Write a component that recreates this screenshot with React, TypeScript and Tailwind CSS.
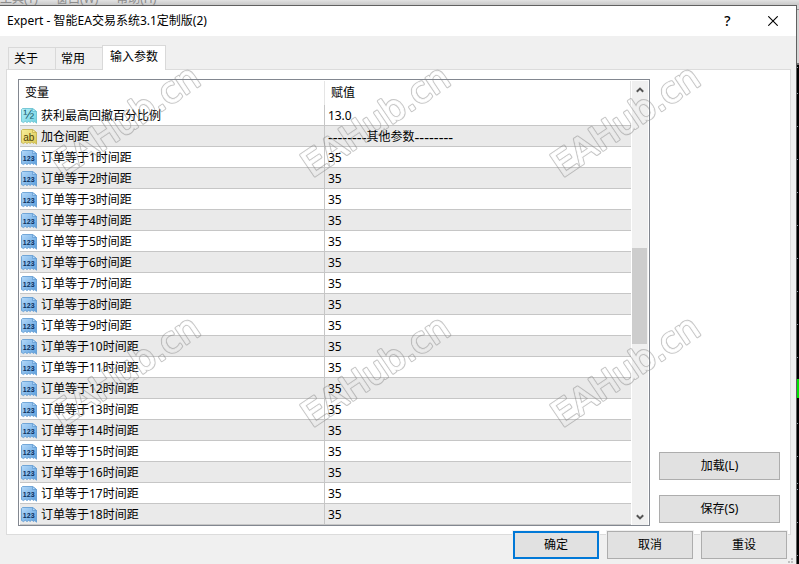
import React, { useState } from 'react';

type ParamKind = 'double' | 'string' | 'int';

interface Param {
  kind: ParamKind;
  name: string;
  value: string;
}

const params: Param[] = [
  { kind: 'double', name: '获利最高回撤百分比例', value: '13.0' },
  { kind: 'string', name: '加仓间距', value: '--------其他参数--------' },
  ...Array.from({ length: 18 }, (_, i): Param => ({
    kind: 'int',
    name: `订单等于${i + 1}时间距`,
    value: '35',
  })),
];

const tabs = ['关于', '常用', '输入参数'];

const iconStyles = {
  double: { from: '#b5f0f8', to: '#6fd0e0', edge: '#5fbccd', ink: '#17596a', text: '½', size: 13 },
  string: { from: '#f8ee9a', to: '#dcc955', edge: '#c2ae45', ink: '#4d4208', text: 'ab', size: 10 },
  int: { from: '#b4d9fa', to: '#5d9fdc', edge: '#5b97cf', ink: '#0b2f5c', text: '123', size: 7 },
};

const ParamIcon: React.FC<{ kind: ParamKind }> = ({ kind }) => {
  const s = iconStyles[kind];
  return (
    <svg viewBox="0 0 16 16" className="w-4 h-4 shrink-0" aria-hidden="true">
      <defs>
        <linearGradient id={`icon-${kind}`} x1="0" y1="0" x2="1" y2="1">
          <stop offset="0" stopColor={s.from} />
          <stop offset="1" stopColor={s.to} />
        </linearGradient>
      </defs>
      <path
        d="M1.5 .5H11.5L15.5 3.5V15.2L13.8 13.6L12.2 14.4L10.8 13L9.2 14.4L7.6 13.4L6 14.6L4.2 13.2L2.6 14.6L.5 13.6V1.5Z"
        fill={`url(#icon-${kind})`}
        stroke={s.edge}
        strokeWidth=".8"
      />
      <path d="M11.5 .5V3.5H15.5Z" fill={s.from} stroke={s.edge} strokeWidth=".7" />
      <text
        x="7.7"
        y={kind === 'string' ? 11.5 : 11}
        fontSize={s.size}
        fontWeight={kind === 'int' ? 700 : 400}
        textAnchor="middle"
        fill={s.ink}
        fontFamily="'Liberation Sans', sans-serif"
      >
        {s.text}
      </text>
    </svg>
  );
};

interface DialogButtonProps {
  children: React.ReactNode;
  className?: string;
  primary?: boolean;
}

const DialogButton: React.FC<DialogButtonProps> = ({ children, className = '', primary }) => (
  <button
    type="button"
    className={`h-7 bg-[#e1e1e1] text-center ${primary ? 'border-2 border-[#0078d7]' : 'border border-[#adadad]'} ${className}`}
  >
    {children}
  </button>
);

const ScrollBar: React.FC = () => (
  <div className="w-4 mr-px shrink-0 bg-[#f0f0f0] flex flex-col">
    <button type="button" aria-label="向上滚动" className="h-[17px] flex items-center justify-center">
      <svg viewBox="0 0 8 6" className="w-2 h-1.5">
        <path d="M.8 4.8L4 1.6L7.2 4.8" fill="none" stroke="#555" strokeWidth="2" />
      </svg>
    </button>
    <div className="flex-1 flex flex-col">
      <div className="grow-[150]" />
      <div className="grow-[95] w-[15px] bg-[#cdcdcd]" />
      <div className="grow-[164]" />
    </div>
    <button type="button" aria-label="向下滚动" className="h-[17px] flex items-center justify-center">
      <svg viewBox="0 0 8 6" className="w-2 h-1.5">
        <path d="M.8 1.2L4 4.4L7.2 1.2" fill="none" stroke="#555" strokeWidth="2" />
      </svg>
    </button>
  </div>
);

// runs of dashes mark a group heading, they are set larger than the text
const ParamValue: React.FC<{ value: string }> = ({ value }) => (
  <div className="flex items-center h-5 pt-px">
    {value.split(/(-+)/).filter(Boolean).map((part, i) => (
      <span key={i} className={part.startsWith('-') ? 'text-[15px] leading-3' : ''}>{part}</span>
    ))}
  </div>
);

const ParamTable: React.FC = () => (
  <div className="flex-1 min-w-0 flex gap-px bg-white border border-[#828790] pt-px pl-px">
    <table className="flex-1 table-fixed border-separate border-spacing-0 text-left">
      <thead>
        <tr className="h-6">
          <th className="w-[49.9%] p-0 pl-[5px] font-normal border-r border-[#e5e5e5]">变量</th>
          <th className="p-0 pl-1.5 font-normal border-r border-[#e5e5e5]">赋值</th>
        </tr>
      </thead>
      <tbody>
        {params.map((p) => (
          <tr key={p.name} className="h-[21px] even:bg-[#eaeaea]">
            <td className="p-0 pl-px border-r border-b border-[#c6c6c6]">
              <div className="flex items-center gap-1 h-5 pt-px">
                <ParamIcon kind={p.kind} />
                <span className="whitespace-nowrap">{p.name}</span>
              </div>
            </td>
            <td className="p-0 pl-[3px] border-b border-[#c6c6c6] whitespace-nowrap">
              <ParamValue value={p.value} />
            </td>
          </tr>
        ))}
      </tbody>
    </table>
    <ScrollBar />
  </div>
);

// chart window that shows past the right edge of the dialog
const ChartEdge: React.FC = () => (
  <svg className="w-0.5 h-full shrink-0 bg-black" aria-hidden="true">
    <rect width="2" height="59" fill="#d4d4d4" />
    <rect y="4" width="2" height="1" fill="#909090" />
    <rect y="58" width="2" height="2" fill="#707070" />
    {[62, 88, 121, 154, 187, 220, 253, 286, 319, 352, 385, 418, 451, 478, 484, 517, 550].map((y) => (
      <rect key={y} y={y} width="1" height="1" fill="#8a94a0" />
    ))}
    <rect y="374" width="2" height="19" fill="#00e000" />
  </svg>
);

const marks = [178, 428].flatMap((y) => [62, 312, 562].map((x) => ({ x, y })));

// the mask keeps only a thin rounded contour around the letters
const Watermark: React.FC = () => (
  <svg className="absolute inset-0 w-full h-full pointer-events-none" aria-hidden="true">
    <mask id="contour" maskUnits="userSpaceOnUse" x="0" y="0" width="100%" height="100%">
      {marks.map(({ x, y }) => (
        <g
          key={`${x}-${y}`}
          transform={`translate(${x} ${y}) rotate(-34)`}
          fontSize="35"
          fontFamily="'DejaVu Sans', sans-serif"
          strokeLinejoin="round"
        >
          <text fill="#fff" stroke="#fff" strokeWidth="2.8">EAHub.cn</text>
          <text fill="#000" stroke="#000" strokeWidth=".8">EAHub.cn</text>
        </g>
      ))}
    </mask>
    <rect width="100%" height="100%" fill="#808080" fillOpacity=".45" mask="url(#contour)" />
  </svg>
);

const App: React.FC = () => {
  const [activeTab, setActiveTab] = useState(2);

  return (
    <div className="relative h-screen overflow-hidden flex flex-col bg-[#dedede] text-black text-[12px] leading-4 font-['Noto_Sans','Noto_Sans_CJK_SC',sans-serif]">
      <div className="h-[5px] shrink-0 overflow-hidden flex items-end gap-[18px] leading-3 text-[#8c8c8c] bg-linear-to-b from-[#e2e2e2] to-[#c8c8c8]">
        <span>工具(T)</span>
        <span>窗口(W)</span>
        <span>帮助(H)</span>
      </div>

      <div className="flex-1 min-h-0 flex">
        <main className="flex-1 min-w-0 flex flex-col bg-[#f0f0f0] border-t border-r border-[#606060]">
          <header className="h-[30px] shrink-0 bg-white flex items-center pl-[7px]">
            <h1 className="flex-1">Expert - 智能EA交易系统3.1定制版(2)</h1>
            <button type="button" aria-label="帮助" className="w-[45px] h-full text-[14px] font-medium">?</button>
            <button type="button" aria-label="关闭" className="w-[46px] h-full flex items-center justify-center">
              <svg viewBox="0 0 10 10" className="w-2.5 h-2.5">
                <path d="M.3 .3L9.7 9.7M9.7 .3L.3 9.7" stroke="#000" strokeWidth="1.1" />
              </svg>
            </button>
          </header>

          <div role="tablist" className="relative flex items-end pt-[9px] pl-2 -mb-px">
            {tabs.map((tab, i) => (
              <button
                key={tab}
                type="button"
                role="tab"
                aria-selected={i === activeTab}
                onClick={() => setActiveTab(i)}
                className={
                  i === activeTab
                    ? 'h-[25px] px-[7px] pb-0.5 bg-white border border-b-0 border-[#d9d9d9]'
                    : 'h-[23px] pl-[5px] pr-[17px] border border-r-0 border-[#d9d9d9]'
                }
              >
                {tab}
              </button>
            ))}
          </div>

          <section className="ml-1.5 mr-[5px] flex gap-[9px] bg-white border border-[#dcdcdc] pt-[9px] pb-2 pl-[11px] pr-2.5">
            <ParamTable />
            <div className="w-[121px] flex flex-col justify-end gap-[15px] pb-[3px]">
              <DialogButton>加载(L)</DialogButton>
              <DialogButton>保存(S)</DialogButton>
            </div>
          </section>

          <footer className="relative flex justify-end gap-2 -mt-1 pr-[9px]">
            <DialogButton primary className="w-[86px] ring-1 ring-[#f0f0f0]">确定</DialogButton>
            <DialogButton className="w-[86px] ring-1 ring-[#f0f0f0]">取消</DialogButton>
            <DialogButton className="w-[86px] ring-1 ring-[#f0f0f0]">重设</DialogButton>
            <svg viewBox="0 0 5 5" className="absolute right-[3px] -bottom-1 w-[5px] h-[5px]" aria-hidden="true">
              <path d="M3 0h2v2h-2zM0 3h2v2h-2zM3 3h2v2h-2z" fill="#bfbfbf" />
            </svg>
          </footer>
        </main>
        <ChartEdge />
      </div>

      <Watermark />
    </div>
  );
};

export default App;
